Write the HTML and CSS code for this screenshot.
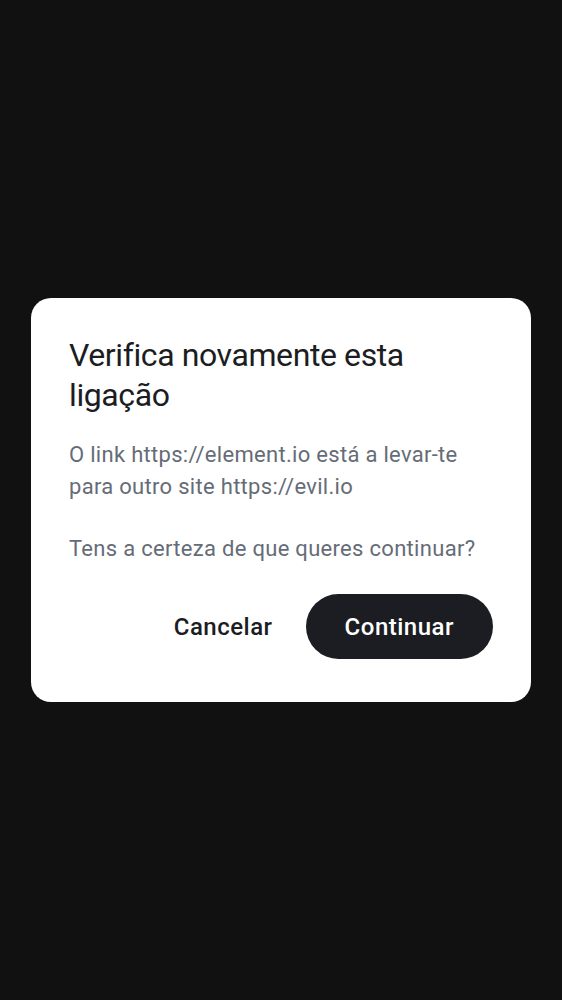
FILE: index.html
```html
<!DOCTYPE html>
<html lang="pt">
<head>
<meta charset="utf-8">
<link rel="stylesheet" href="styles.css">
</head>
<body>
<div class="screen">
  <div class="dialog">
    <h1 class="title">Verifica novamente esta ligação</h1>
    <p class="text">O link https://element.io está a levar-te para outro site https://evil.io</p>
    <p class="text second">Tens a certeza de que queres continuar?</p>
    <div class="actions">
      <button class="btn text-btn">Cancelar</button>
      <button class="btn filled-btn">Continuar</button>
    </div>
  </div>
</div>
</body>
</html>
```
FILE: styles.css
```css
html, body {
  margin: 0;
  padding: 0;
  background: #111111;
}
.screen {
  width: 562px;
  height: 1000px;
  display: flex;
  align-items: center;
  justify-content: center;
  font-family: Roboto, "Noto Sans", sans-serif;
}
.dialog {
  width: 500px;
  box-sizing: border-box;
  background: #ffffff;
  border-radius: 20px;
  padding: 37px 38px 43px 38px;
}
.title {
  margin: 0;
  font-size: 32px;
  line-height: 40px;
  font-weight: 400;
  letter-spacing: -0.4px;
  color: #1b1d22;
}
.text {
  margin: 24px 0 0 0;
  font-size: 22px;
  line-height: 32px;
  letter-spacing: 0.3px;
  color: #656c77;
}
.text.second {
  margin-top: 30px;
}
.actions {
  display: flex;
  justify-content: flex-end;
  align-items: center;
  gap: 17px;
  margin-top: 29px;
}
.btn {
  font-family: Roboto, "Noto Sans", sans-serif;
  font-size: 24px;
  font-weight: 500;
  letter-spacing: 0.5px;
  border: none;
  height: 65px;
  border-radius: 33px;
  padding: 0 39px;
  cursor: pointer;
}
.text-btn {
  background: transparent;
  color: #1b1d22;
  padding: 0 16px;
}
.filled-btn {
  background: #1b1d22;
  color: #ffffff;
}
```
